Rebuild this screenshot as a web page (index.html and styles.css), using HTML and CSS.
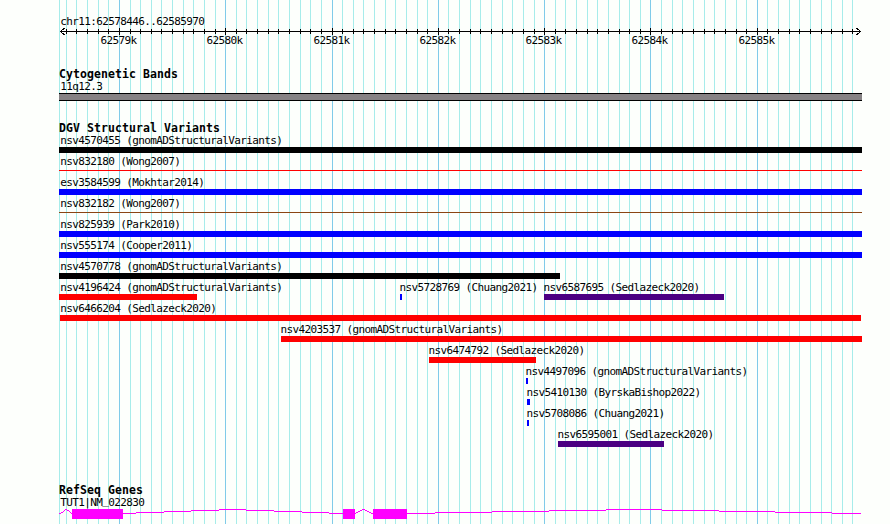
FILE: index.html
```
<!DOCTYPE html>
<html>
<head>
    <meta charset="utf-8">
    <title>chr11:62578446..62585970</title>
    <link rel="stylesheet" href="styles.css">
</head>
<body>
    <div class="browser">
        <svg class="grid" id="grid" width="890" height="524"></svg>

        <div class="region">chr11:62578446..62585970</div>
        <svg class="ruler" id="ruler" width="890" height="20">
            <path class="axis" d="M60 3.5H861"/>
            <path class="arrow" d="M64.5 0L60.5 3.5L64.5 7M856.5 0L860.5 3.5L856.5 7"/>
        </svg>

        <div class="track cyto">
            <h3>Cytogenetic Bands</h3>
            <div class="label">11q12.3</div>
            <div class="band"></div>
        </div>

        <div class="track variants">
            <h3>DGV Structural Variants</h3>
            <div id="variants"></div>
        </div>

        <div class="track genes">
            <h3>RefSeq Genes</h3>
            <div class="label">TUT1|NM<span class="underscore">_</span>022830</div>
            <svg class="gene" width="803" height="10" viewBox="59 509 803 10">
                <path class="intron" d="M59 513.5h2m0-1h2m0-1h1m0-1h1m0-1h2m0 1h2m0 1h1m0 1h1m0 1h1"/>
                <path class="intron" d="M123 513.5H136M136 512.5H164M164 511.5H191M191 510.5H219M219 509.5H246M246 510.5H274M274 511.5H302M302 512.5H329M329 513.5H343"/>
                <path class="intron" d="M355 513.5h1m0-1h2m0-1h2m0-1h2m0-1h3m0 1h2m0 1h2m0 1h2m0 1h2"/>
                <path class="intron" d="M407 513.5H435M435 512.5H492M492 511.5H549M549 510.5H606M606 509.5H662M662 510.5H719M719 511.5H775M775 512.5H832M832 513.5H861"/>
                <rect class="exon" x="72" y="509" width="51" height="10"/>
                <rect class="exon" x="343" y="509" width="12" height="10"/>
                <rect class="exon" x="373" y="509" width="34" height="10"/>
            </svg>
        </div>
    </div>

    <script>
        var start = 62578446;
        var scale = 800 / 7525;
        var grid = '<path class="minor" d="M59.5 0V524"/>';
        var ticks = '';

        for (var pos = 62578500; pos < 62585970; pos += 100) {
            var x = Math.round(60 + (pos - start) * scale);
            var major = pos % 1000 === 0;
            grid += `<path class="${major ? 'major' : 'minor'}" d="M${x + 0.5} 0V524"/>`;
            ticks += `<path class="axis" d="M${x + 0.5} ${major ? '0V7' : '1V6'}"/>`;
            if (major) {
                ticks += `<text x="${x - 18.5}" y="16">${pos / 1000}k</text>`;
            }
        }
        document.getElementById("grid").innerHTML = grid;
        document.getElementById("ruler").innerHTML += ticks;

        // one array per row: name, left, right, colour class
        var rows = [
            [["nsv4570455 (gnomADStructuralVariants)", 59, 862, "black"]],
            [["nsv832180 (Wong2007)", 59, 862, "red thin"]],
            [["esv3584599 (Mokhtar2014)", 59, 862, "blue"]],
            [["nsv832182 (Wong2007)", 59, 862, "brown thin"]],
            [["nsv825939 (Park2010)", 59, 862, "blue"]],
            [["nsv555174 (Cooper2011)", 59, 862, "blue"]],
            [["nsv4570778 (gnomADStructuralVariants)", 59, 560, "black"]],
            [["nsv4196424 (gnomADStructuralVariants)", 59, 197, "red"],
             ["nsv5728769 (Chuang2021)", 400, 402, "blue"],
             ["nsv6587695 (Sedlazeck2020)", 544, 724, "indigo"]],
            [["nsv6466204 (Sedlazeck2020)", 60, 861, "red"]],
            [["nsv4203537 (gnomADStructuralVariants)", 281, 862, "red"]],
            [["nsv6474792 (Sedlazeck2020)", 429, 536, "red"]],
            [["nsv4497096 (gnomADStructuralVariants)", 526, 528, "blue"]],
            [["nsv5410130 (ByrskaBishop2022)", 527, 530, "blue"]],
            [["nsv5708086 (Chuang2021)", 527, 529, "blue"]],
            [["nsv6595001 (Sedlazeck2020)", 558, 664, "indigo"]]
        ];

        var html = '';
        rows.forEach(function (row) {
            var edge = 59;
            html += '<div class="row">';
            row.forEach(function (f) {
                var indent = Math.max(60.3, f[1] - 0.6) - f[1];
                html += `<div class="feature" style="margin-left: ${f[1] - edge}px; width: ${f[2] - f[1]}px">
                    <div class="name" style="text-indent: ${indent}px">${f[0]}</div>
                    <div class="bar ${f[3]}"></div>
                </div>`;
                edge = f[2];
            });
            html += '</div>';
        });
        document.getElementById("variants").innerHTML = html;
    </script>
</body>
</html>
```

FILE: styles.css
```
body {
    margin: 0;
    background-color: #fdfffc;
    color: #000;
    font-family: "DejaVu Sans Mono", monospace;
    font-size: 11px;
    letter-spacing: -0.622px;
}

.browser {
    position: relative;
    height: 524px;
    overflow: hidden;
}

svg {
    display: block;
    shape-rendering: crispEdges;
}

.grid {
    position: absolute;
    top: 0;
    left: 0;
    z-index: -1;
}

.minor {
    stroke: #a6ecea;
}

.major {
    stroke: #80cbe9;
}

.region {
    padding: 15px 0 0 60.3px;
    height: 13px;
    line-height: 13px;
}

.axis {
    stroke: #000;
}

.arrow {
    fill: none;
    stroke: #000;
}

.track {
    padding-left: 59px;
    width: 803px;
}

.cyto {
    padding-top: 20px;
}

.variants {
    padding-top: 21px;
}

.genes {
    padding-top: 37px;
}

h3 {
    margin: 0;
    height: 12px;
    line-height: 12px;
    font-size: 11.5px;
    letter-spacing: 0.077px;
}

.label {
    height: 13px;
    padding-left: 1.3px;
    line-height: 13px;
}

.underscore {
    line-height: 1px;
    vertical-align: 2px;
}

.band {
    box-sizing: border-box;
    height: 8px;
    background-color: #868284;
    border-top: 1px solid #000;
    border-bottom: 1px solid #000;
}

#variants {
    margin-top: -2px;
}

.row {
    display: flex;
    height: 21px;
}

.feature {
    flex: none;
}

.name {
    box-sizing: border-box;
    height: 15px;
    padding-top: 3px;
    line-height: 12px;
    white-space: nowrap;
}

.bar {
    height: 6px;
}

.thin {
    height: 1px;
    margin-top: 2px;
}

.black {
    background-color: #000;
}

.red {
    background-color: #f00;
}

.blue {
    background-color: #00f;
}

.brown {
    background-color: #8b4513;
}

.indigo {
    background-color: #4b0082;
}

.intron {
    fill: none;
    stroke: #f0f;
}

.exon {
    fill: #f0f;
}
```
